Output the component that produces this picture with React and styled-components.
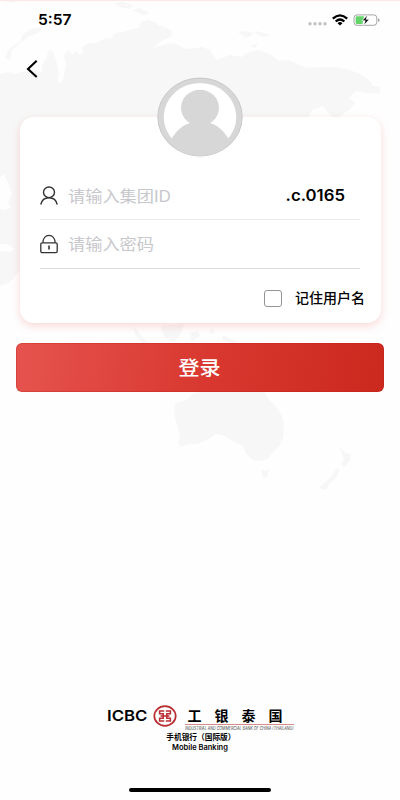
import React from 'react';
import styled, { createGlobalStyle } from 'styled-components';

const GlobalStyle = createGlobalStyle`
	* { box-sizing: border-box; }
	body {
		margin: 0;
		background: #ffffff;
		font-family: Inter, "Noto Sans CJK SC", sans-serif;
	}
`;

const Screen = styled.div`
	position: relative;
	display: flex;
	flex-direction: column;
	width: 400px;
	height: 800px;
	overflow: hidden;
	background: #fefefe;
	border-top: 1px solid #fbe9e9;
`;

const MapLayer = styled.svg`
	position: absolute;
	top: -1px;
	left: 0;
	fill: #f7f7f7;
`;

const Content = styled.div`
	position: relative;
	flex: 1;
	display: flex;
	flex-direction: column;
`;

const Text = styled.span`
	display: block;
	flex: none;
	white-space: nowrap;
	color: ${(props) => props.$color || '#000000'};
	font-size: ${(props) => props.$size}px;
	font-weight: ${(props) => props.$weight || 400};
	line-height: ${(props) => props.$line || 20}px;
	letter-spacing: ${(props) => props.$spacing || 0}px;
	transform: scaleX(${(props) => props.$stretch || 1});
	transform-origin: ${(props) => props.$origin || 'left'} center;
`;

const StatusBar = styled.div`
	display: flex;
	justify-content: space-between;
	height: 40px;
	padding: 9px 20px 0 38px;
`;

const StatusIcons = styled.div`
	display: flex;
	align-items: flex-start;
`;

const NavBar = styled.div`
	height: 76px;
	padding: 18px 26px 0;
`;

const LoginCard = styled.div`
	display: flex;
	flex-direction: column;
	height: 206px;
	margin: 0 19px 0 20px;
	padding: 0 21px 0 20px;
	border-radius: 14px;
	background: #ffffff;
	box-shadow: 0 3px 8px rgba(238, 105, 105, 0.25);
`;

const Avatar = styled.svg`
	align-self: center;
	flex: none;
	margin-top: -40px;
`;

const Field = styled.div`
	display: flex;
	align-items: center;
	height: ${(props) => props.$height}px;
	margin-top: ${(props) => props.$top || 0}px;
	padding-right: 15px;
	border-bottom: 1px solid ${(props) => props.$line};
`;

const FieldIcon = styled.svg`
	flex: none;
	margin-right: 10px;
`;

const Suffix = styled.div`
	margin-left: auto;
`;

const Remember = styled.label`
	display: flex;
	align-items: center;
	justify-content: flex-end;
	margin: 19px -5px 0 0;
`;

const Checkbox = styled.div`
	width: 18px;
	height: 17px;
	margin-right: 13px;
	border: 1px solid #949494;
	border-radius: 3px;
	background: #ffffff;
`;

const LoginButton = styled.button`
	display: flex;
	align-items: center;
	justify-content: center;
	height: 49px;
	margin: 20px 16px 0 16px;
	padding: 0;
	border: 1px solid rgba(190, 30, 25, 0.3);
	border-radius: 6px;
	background: linear-gradient(100deg, #e6544f 0%, #d8382f 52%, #cb291e 100%) border-box;
	font-family: inherit;
`;

const Brand = styled.footer`
	display: flex;
	flex-direction: column;
	align-items: center;
	margin-top: auto;
	height: 95px;
`;

const LogoRow = styled.div`
	display: flex;
	width: 187px;
	height: 27px;
`;

const Wordmark = styled.div`
	width: 46px;
`;

const BankName = styled.div`
	width: 109px;
	margin-left: 8px;
`;

const BankTitle = styled.div`
	display: flex;
	height: 20px;
	padding-left: 3px;
	border-bottom: 1px solid #d98b8b;
	font-family: "Noto Sans CJK SC", sans-serif;
`;

const HomeIndicator = styled.div`
	width: 142px;
	height: 4px;
	margin-top: 35px;
	border-radius: 2px;
	background: #000000;
`;

const WorldMap = () => (
	<MapLayer width="400" height="800" viewBox="0 0 400 800">
		<path d="M0 74L8 72 14 74 22 72 34 70 42 72 42 66 46 58 49 50 53 51 56 60 59 72 58 82 61 84 64 76 66 65 64 55 68 50 73 55 75 51 82 55 83 46 90 43 97 43 106 38 112 38 115 33 124 32 132 29 139 28 141 22 148 20 154 22 158 25 167 28 172 31 171 37 160 42 153 48 163 45 174 43 186 49 196 48 202 47 210 50 216 60 230 55 241 57 247 53 257 50 270 54 279 61 288 60 297 64 307 68 319 67 335 67 350 70 360 74 369 80 373 86 381 87 379 94 368 93 356 91 349 98 355 103 350 109 339 117 334 120 323 106 312 110 308 118 324 128 323 145 311 155 300 170 292 195 279 207 265 220 263 240 250 250 236 270 230 300 215 294 205 270 193 249 178 270 174 303 166 308 159 285 148 250 133 240 117 240 104 219 96 222 109 238 98 260 83 265 72 247 63 223 53 206 55 190 43 185 28 177 20 165 0 165Z" />
		<path d="M0 165H20V270L10 282 0 286Z" />
		<path d="M5 58L8 51 13 46 20 42 23 34 31 29 42 27 38 33 28 37 20 43 12 50 10 60Z" />
		<path d="M114 4L123 1 133 6 129 9 119 7ZM132 10L140 8 150 13 143 15ZM238 32L248 31 254 34 246 38ZM256 31L271 35 264 37 255 34ZM250 45L258 44 255 48ZM4 1L19 1 12 3Z" />
		<path d="M132 325L140 334 151 346 143 344 135 334ZM161 326L184 324 180 336 173 342 164 337ZM190 333L198 331 200 336 191 342ZM211 328L215 332 210 334ZM223 335L230 339 239 341 234 344 222 340Z" />
		<path d="M174 406L178 402 187 400 193 394 205 391 219 391 228 384 232 392 241 389 250 380 254 384 259 389 263 386 267 397 277 408 282 416 284 426 283 438 279 446 273 452 268 459 260 461 253 460 246 454 243 446 236 443 232 441 225 436 216 434 207 440 197 444 187 444 181 447 178 443 180 437 175 417Z" />
		<path d="M261 469L265 471 269 469 267 477 263 478ZM339 446L342 449 345 453 351 454 350 461 344 467 341 464 344 460 341 451ZM337 468L340 470 335 479 329 484 326 490 319 488 324 483 331 477Z" />
		<path d="M0 177L4 174 8 183 12 194 8 203 11 208 4 210 0 209ZM0 244L8 244 15 249 10 252 0 251Z" fill="#fefefe" />
	</MapLayer>
);

const App = () => {
	const bankChars = ['工', '银', '泰', '国'];

	return (
		<Screen>
			<GlobalStyle />
			<WorldMap />
			<Content>
				<StatusBar>
					<Text $size={15} $weight={600} $stretch={1.04} $line={20}>5:57</Text>
					<StatusIcons>
						<svg width="75" height="22" viewBox="0 0 75 22">
							<g fill="#c2c2c2">
								<circle cx="5" cy="13.7" r="1.7" />
								<circle cx="10" cy="13.7" r="1.7" />
								<circle cx="15" cy="13.7" r="1.7" />
								<circle cx="20" cy="13.7" r="1.7" />
							</g>
							<g fill="none" stroke="#000" strokeWidth="2.3">
								<path d="M27.8 8.6Q35 2.1 42.2 8.6" />
								<path d="M30.7 11.5Q35 7.5 39.3 11.5" />
							</g>
							<path d="M32.5 13.2Q35 11 37.5 13.2L35 15.4Z" />
							<rect x="49" y="4.9" width="22.8" height="10.4" rx="3" fill="#fff" stroke="#a5a5a5" />
							<path d="M51.7 6.3H59L57.5 14H51.7Q50.6 14 50.6 12.5V7.8Q50.6 6.3 51.7 6.3Z" fill="#65d56b" />
							<path d="M73 8.2Q74.7 8.7 74.7 10.1T73 12Z" fill="#a5a5a5" />
							<path d="M62.8 4.8L57 10.7H60.2L58.7 15.5 64.3 9.3H61.1Z" stroke="#fff" strokeWidth="0.7" />
						</svg>
					</StatusIcons>
				</StatusBar>

				<NavBar>
					<svg width="14" height="20" viewBox="0 0 14 20">
						<path d="M10.7 1.7L2 10 10.7 18" fill="none" stroke="#000" strokeWidth="2.1" />
					</svg>
				</NavBar>

				<LoginCard>
					<Avatar width="86" height="80" viewBox="0 0 86 80">
						<defs>
							<clipPath id="avatarClip">
								<ellipse cx="43" cy="40" rx="42" ry="39" />
							</clipPath>
						</defs>
						<ellipse cx="43" cy="40" rx="42.2" ry="39" fill="#d7d7d7" stroke="#c8c8c8" />
						<ellipse cx="43" cy="40" rx="36.3" ry="34" fill="#fff" />
						<g fill="#d7d7d7" clipPath="url(#avatarClip)">
							<ellipse cx="43" cy="30.8" rx="19" ry="18" />
							<path d="M15 61C20 53 26 48 33 46L36 43H50L53 46C60 48 66 53 71 61L66 80H20Z" />
						</g>
					</Avatar>

					<Field $height={48} $top={15} $line="#eaeaea">
						<FieldIcon width="18" height="20" viewBox="0 0 18 20" fill="none" stroke="#333" strokeWidth="1.4">
							<ellipse cx="9" cy="6.3" rx="5.5" ry="5.3" />
							<path d="M.8 18.5C1.7 14.2 5.1 11.7 9 11.7S16.3 14.2 17.2 18.5" />
						</FieldIcon>
						<Text $size={16} $color="#c7c7cc" $stretch={1.075} $line={22}>请输入集团ID</Text>
						<Suffix>
							<Text $size={15.5} $weight={600} $stretch={1.08} $origin="right">.c.0165</Text>
						</Suffix>
					</Field>

					<Field $height={49} $line="#dcdcdc">
						<FieldIcon width="18" height="20" viewBox="0 0 18 20" fill="none" stroke="#333" strokeWidth="1.3">
							<rect x=".8" y="8.8" width="16.4" height="9.8" rx="1.3" />
							<path d="M2.9 8.7C3.1 4.4 5.5 1.4 9 1.4S14.9 4.4 15.1 8.7" />
							<path d="M9 11.5V15.5" strokeWidth="1.6" />
						</FieldIcon>
						<Text $size={16} $color="#c7c7cc" $stretch={1.075}>请输入密码</Text>
					</Field>

					<Remember>
						<Checkbox />
						<Text $size={14} $weight={500}>记住用户名</Text>
					</Remember>
				</LoginCard>

				<LoginButton>
					<Text $size={19.5} $weight={500} $color="#ffffff" $stretch={1.08} $origin="center" $line={26}>登录</Text>
				</LoginButton>

				<Brand>
					<LogoRow>
						<Wordmark>
							<Text $size={15} $weight={600} $stretch={1.12} $line={22}>ICBC</Text>
						</Wordmark>
						<svg width="24" height="22" viewBox="0 0 24 22" fill="none" stroke="#b92d32">
							<ellipse cx="12" cy="11" rx="10.7" ry="9.8" strokeWidth="1.7" />
							<path d="M11.2 6H6.6V8.8H10.2V13.2H6.6V16H11.2M12.8 6H17.4V8.8H13.8V13.2H17.4V16H12.8M7.5 11H16.5" strokeWidth="1.5" />
						</svg>
						<BankName>
							<BankTitle>
								{bankChars.map((char) => (
									<Text key={char} $size={14} $weight={700} $spacing={13} $line={21}>{char}</Text>
								))}
							</BankTitle>
							<Text $size={4.3} $color="#444444" $line={7} $stretch={0.85}>
								<i>INDUSTRIAL AND COMMERCIAL BANK OF CHINA (THAILAND)</i>
							</Text>
						</BankName>
					</LogoRow>
					<Text $size={8} $weight={700} $line={10} $stretch={0.96} $origin="center">&nbsp;手机银行（国际版）</Text>
					<Text $size={7.5} $weight={600} $line={11} $origin="center">Mobile Banking</Text>
					<HomeIndicator />
				</Brand>
			</Content>
		</Screen>
	);
};

export default App;
